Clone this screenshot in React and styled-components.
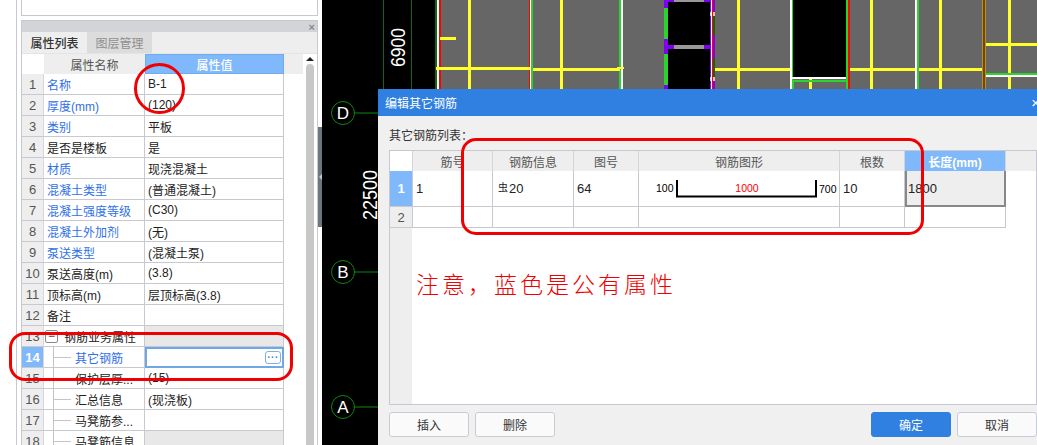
import React from "react";
import styled, { createGlobalStyle } from "styled-components";

const GlobalStyle = createGlobalStyle`
  html, body {
    margin: 0;
    background: #fff;
    overflow: hidden;
  }
  * {
    box-sizing: border-box;
  }
`;

const Screen = styled.div`
  position: relative;
  display: flex;
  width: 1037px;
  height: 445px;
  overflow: hidden;
  font-family: "Liberation Sans", "Noto Sans CJK SC", sans-serif;
  font-size: 12px;
  color: #222;
`;

/* left side */
const Sidebar = styled.div`
  display: flex;
  flex-direction: column;
  gap: 4px;
  width: 302px;
  margin-left: 16px;
  padding-left: 4px;
  border-left: 1px solid #c8c8d0;
`;

const TopBox = styled.div`
  height: 16px;
  border: 1px solid #c8c8d0;
  border-top: 0;
`;

const Panel = styled.div`
  flex: 1;
  display: flex;
  flex-direction: column;
  min-height: 0;
  border: 1px solid #c8c8d0;
  border-bottom: 0;
  background: #fff;
`;

const PanelBar = styled.div`
  display: flex;
  justify-content: flex-end;
  align-items: center;
  height: 11px;
  padding-right: 2px;
  background: #d3d4d8;
  color: #8a8a8a;
  font-size: 11px;
  font-weight: 700;
`;

const Tabs = styled.div`
  display: flex;
  height: 22px;
  background: #eee;
  border-bottom: 1px solid #e4e4e4;
`;

const Tab = styled.div`
  display: flex;
  align-items: center;
  justify-content: center;
  width: 65px;
  color: ${({ $active }) => ($active ? "#333" : "#8f8f8f")};
  font-weight: ${({ $active }) => ($active ? 500 : 400)};
  background: ${({ $active }) => ($active ? "#eee" : "#dcdcdc")};
`;

const PanelBody = styled.div`
  flex: 1;
  display: flex;
  min-height: 0;
`;

const PropTable = styled.div`
  flex: none;
  width: 281px;
  overflow: hidden;
`;

const PropHead = styled.div`
  display: grid;
  grid-template-columns: 22px 101px 139px 19px;
  height: 20px;
`;

const HeadCell = styled.div`
  display: flex;
  align-items: center;
  justify-content: center;
  background: ${({ $active, $blank }) =>
    $active ? "#7fb9fb" : $blank ? "#fff" : "#eee"};
  color: ${({ $active }) => ($active ? "#fff" : "#555")};
  border: ${({ $active }) => ($active ? "1px solid #6fade8" : "0")};
  font-weight: ${({ $active }) => ($active ? 500 : 400)};
`;

const PropRow = styled.div`
  display: grid;
  grid-template-columns: 22px 101px 139px;
  height: 21px;
`;

const RowNum = styled.div`
  display: flex;
  align-items: center;
  justify-content: center;
  background: ${({ $active }) => ($active ? "#7fb9fb" : "#eee")};
  color: ${({ $active }) => ($active ? "#fff" : "#555")};
  font-size: 13px;
  font-weight: ${({ $active }) => ($active ? 700 : 400)};
  border-bottom: 1px solid #c8c8d0;
  border-right: 1px solid #d6d6dc;
`;

const NameCell = styled.div`
  display: flex;
  align-items: center;
  padding-left: ${({ $tree }) => ($tree ? "0" : "3px")};
  color: ${({ $shared }) => ($shared ? "#2f6fe8" : "#222")};
  border-bottom: 1px solid #c8c8d0;
  border-right: 1px solid #c8c8d0;
  white-space: nowrap;
`;

const ValueCell = styled.div`
  display: flex;
  align-items: center;
  padding: 0 ${({ $editing }) => ($editing ? "1px" : "3px")};
  background: ${({ $group }) => ($group ? "#e8e8e8" : "#fff")};
  border-bottom: 1px solid #c8c8d0;
  border-right: 1px solid #c8c8d0;
  ${({ $editing }) => $editing && "border: 2px solid #6fa8e4;"}
`;

const MoreButton = styled.div`
  display: flex;
  align-items: center;
  justify-content: center;
  width: 16px;
  height: 13px;
  margin-left: auto;
  border: 1px solid #7fb0e6;
  border-radius: 3px;
  color: #4a86d0;
  font-size: 10px;
  font-weight: 700;
  line-height: 1;
  letter-spacing: 0.5px;
`;

const Expander = styled.span`
  display: flex;
  align-items: center;
  justify-content: center;
  width: 13px;
  height: 13px;
  margin: 0 6px 0 -2px;
  border: 1px solid #8a8a8a;
  border-radius: 2px;
  color: #333;
  font-size: 12px;
  line-height: 1;
`;

const TreeGuide = styled.span`
  align-self: stretch;
  width: 22px;
  margin: 0 0 -1px 9px;
  border-left: 1px solid #c4c4c4;
  background: linear-gradient(#c4c4c4, #c4c4c4) left center / 17px 1px no-repeat;
`;

const ScrollColumn = styled.div`
  flex: none;
  width: 8px;
  margin-left: 3px;
  padding-top: 3px;
`;

const ScrollArrow = styled.div`
  width: 0;
  height: 0;
  margin: 0 auto 3px;
  border: 4px solid transparent;
  border-top: 0;
  border-bottom: 4px solid #222;
`;

const ScrollThumb = styled.div`
  height: 100%;
  background: #c8c8c8;
  border-radius: 4px 4px 0 0;
`;

const Splitter = styled.div`
  display: flex;
  align-items: center;
  justify-content: center;
  flex: none;
  width: 4px;
  height: 100px;
  margin-top: 127px;
  background: #6c7680;

  &::before {
    content: "";
    border: 3px solid transparent;
    border-left: 0;
    border-right: 3px solid #c4c8cc;
  }
`;

/* drawing side */
const CadPane = styled.div`
  position: relative;
  flex: 1;
  background: #000;
  overflow: hidden;
`;

const CadSvg = styled.svg`
  display: block;
`;

const Dialog = styled.div`
  position: absolute;
  top: 89px;
  left: 56px;
  display: flex;
  flex-direction: column;
  width: 680px;
  height: 356px;
  background: #f0f0f0;
`;

const DialogTitle = styled.div`
  display: flex;
  align-items: center;
  justify-content: space-between;
  height: 27px;
  padding: 0 18px 0 7px;
  background: #2f80e0;
  color: #fff;
`;

const CloseMark = styled.span`
  font-size: 15px;
`;

const DialogBody = styled.div`
  flex: 1;
  display: flex;
  flex-direction: column;
  padding: 10px 21px 8px 11px;
`;

const ListLabel = styled.div`
  height: 20px;
  margin-bottom: 4px;
  line-height: 20px;
  color: #333;
`;

const BarTable = styled.div`
  flex: 1;
  border: 1px solid #c8c8d0;
  background: linear-gradient(#eee, #eee) left top / 22px 100% no-repeat, #fff;
`;

const BarGrid = styled.div`
  display: grid;
  grid-template-columns: 23px 80px 81px 65px 201px 65px 101px;
  height: ${({ $height }) => $height}px;
`;

const BarHeadRow = styled(BarGrid)`
  background: #eee;
`;

const BarHead = styled.div`
  display: flex;
  align-items: center;
  justify-content: center;
  border-right: 1px solid #d4d4da;
  background: ${({ $active, $blank }) =>
    $active ? "#7fb9fb" : $blank ? "#fff" : "transparent"};
  color: ${({ $active }) => ($active ? "#fff" : "#555")};
  font-weight: ${({ $active }) => ($active ? 700 : 400)};
`;

const BarNum = styled.div`
  display: flex;
  align-items: center;
  justify-content: center;
  background: ${({ $active }) => ($active ? "#7fb9fb" : "#eee")};
  color: ${({ $active }) => ($active ? "#fff" : "#555")};
  font-size: 13px;
  font-weight: ${({ $active }) => ($active ? 700 : 400)};
  border-bottom: 1px solid #c8c8d0;
  border-right: 1px solid #c8c8d0;
`;

const BarCell = styled.div`
  display: flex;
  align-items: center;
  padding-left: ${({ $selected }) => ($selected ? "1px" : "3px")};
  font-size: 13px;
  background: ${({ $selected }) => ($selected ? "#eee" : "#fff")};
  border-bottom: ${({ $selected }) =>
    $selected ? "2px solid #888" : "1px solid #c8c8d0"};
  border-right: ${({ $selected }) =>
    $selected ? "2px solid #888" : "1px solid #c8c8d0"};
  border-left: ${({ $selected }) => ($selected ? "2px solid #888" : "0")};
`;

const GradeMark = styled.span`
  position: relative;
  top: -2px;
  font-size: 10px;
  margin: 0 1px 0 2px;
`;

const FigureSvg = styled.svg`
  display: block;
  flex: none;
  margin-left: -3px;
`;

const DialogFooter = styled.div`
  display: flex;
  align-items: center;
  gap: 6px;
  margin-top: 7px;
`;

const FooterSpacer = styled.div`
  flex: 1;
`;

const Button = styled.div`
  display: flex;
  align-items: center;
  justify-content: center;
  width: 80px;
  height: 25px;
  border: 1px solid ${({ $primary }) => ($primary ? "#2f80e0" : "#c8ccd6")};
  border-radius: 3px;
  background: ${({ $primary }) => ($primary ? "#2f80e0" : "#fafafa")};
  color: ${({ $primary }) => ($primary ? "#fff" : "#333")};
`;

/* hand drawn notes on top of the screenshot */
const RedRing = styled.div`
  position: absolute;
  left: ${({ $x }) => $x}px;
  top: ${({ $y }) => $y}px;
  width: ${({ $w }) => $w}px;
  height: ${({ $h }) => $h}px;
  border: 3px solid #f00000;
  border-radius: ${({ $r }) => $r};
`;

const RedNote = styled.div`
  position: absolute;
  left: 416px;
  top: 267px;
  color: #f00000;
  font-family: "Noto Sans CJK SC", sans-serif;
  font-size: 23px;
  font-weight: 300;
  letter-spacing: 3px;
  line-height: 32px;
  white-space: nowrap;
`;

const props = [
  { name: "名称", value: "B-1", shared: true },
  { name: "厚度(mm)", value: "(120)", shared: true },
  { name: "类别", value: "平板", shared: true },
  { name: "是否是楼板", value: "是" },
  { name: "材质", value: "现浇混凝土", shared: true },
  { name: "混凝土类型", value: "(普通混凝土)", shared: true },
  { name: "混凝土强度等级", value: "(C30)", shared: true },
  { name: "混凝土外加剂", value: "(无)", shared: true },
  { name: "泵送类型", value: "(混凝土泵)", shared: true },
  { name: "泵送高度(m)", value: "(3.8)" },
  { name: "顶标高(m)", value: "层顶标高(3.8)" },
  { name: "备注", value: "" },
  { name: "钢筋业务属性", value: "", group: true },
  { name: "其它钢筋", value: "", tree: true, shared: true, editing: true },
  { name: "保护层厚...", value: "(15)", tree: true },
  { name: "汇总信息", value: "(现浇板)", tree: true },
  { name: "马凳筋参...", value: "", tree: true },
  { name: "马凳筋信息", value: "", tree: true, group: true },
];

// x, y, width, height, colour, in page pixels
const cadRects = [
  [441, 0, 596, 89, "#666"],
  [668, 0, 42, 89, "#000"],
  [793, 0, 54, 77, "#000"],
  [383, 0, 1, 89, "#0a6a0a"],
  [411, 0, 1, 89, "#0a6a0a"],
  [435, 0, 2, 89, "#0a6a0a"],
  [437, 0, 2, 89, "#fff"],
  [439, 0, 2, 89, "#f00"],
  [529, 0, 1, 89, "#f00"],
  [530, 0, 1, 89, "#fff"],
  [531, 0, 2, 89, "#2bd42b"],
  [619, 0, 2, 89, "#2bd42b"],
  [621, 0, 2, 89, "#fff"],
  [664, 0, 4, 89, "#2bd42b"],
  [664, 0, 10, 2, "#8000f0"],
  [664, 0, 4, 8, "#8000f0"],
  [664, 39, 4, 15, "#8000f0"],
  [664, 85, 4, 4, "#8000f0"],
  [668, 45, 6, 4, "#8000f0"],
  [674, 0, 30, 2, "#999"],
  [704, 0, 6, 2, "#8000f0"],
  [674, 45, 30, 4, "#999"],
  [704, 45, 6, 4, "#8000f0"],
  [710, 0, 5, 89, "#8000f0"],
  [710, 12, 5, 4, "#ccc"],
  [713, 16, 2, 19, "#0a6a0a"],
  [713, 58, 2, 19, "#0a6a0a"],
  [710, 77, 5, 4, "#ccc"],
  [711, 0, 1, 89, "#fff"],
  [712, 0, 1, 89, "#f00"],
  [468, 0, 3, 89, "#ffff2a"],
  [560, 0, 3, 89, "#ffff2a"],
  [737, 0, 3, 89, "#ffff2a"],
  [870, 0, 3, 89, "#ffff2a"],
  [939, 0, 3, 89, "#ffff2a"],
  [1008, 0, 3, 89, "#ffff2a"],
  [809, 78, 3, 11, "#ffff2a"],
  [440, 37, 16, 3, "#ffff2a"],
  [436, 67, 94, 3, "#ffff2a"],
  [533, 68, 87, 3, "#ffff2a"],
  [617, 67, 7, 2, "#ffff2a"],
  [715, 68, 75, 3, "#ffff2a"],
  [850, 68, 132, 3, "#ffff2a"],
  [982, 43, 55, 3, "#ffff2a"],
  [790, 0, 2, 89, "#fff"],
  [792, 0, 1, 80, "#2bd42b"],
  [792, 77, 56, 2, "#fff"],
  [792, 80, 56, 2, "#2bd42b"],
  [792, 80, 2, 9, "#2bd42b"],
  [846, 0, 2, 89, "#2bd42b"],
  [848, 0, 2, 89, "#f00"],
  [915, 0, 2, 89, "#fff"],
  [917, 0, 2, 89, "#2bd42b"],
  [982, 0, 1, 89, "#2bd42b"],
  [983, 0, 2, 89, "#f00"],
  [985, 0, 1, 89, "#2bd42b"],
  [986, 73, 51, 2, "#2bd42b"],
  [986, 75, 51, 2, "#fff"],
];

const axes = [
  { label: "D", y: 113 },
  { label: "B", y: 272 },
  { label: "A", y: 407 },
];

const CadDrawing = () => (
  <CadSvg width="715" height="445" viewBox="322 0 715 445">
    {cadRects.map(([x, y, w, h, fill], i) => (
      <rect key={i} x={x} y={y} width={w} height={h} fill={fill} />
    ))}
    {axes.map((axis) => (
      <g key={axis.label}>
        <circle cx="343" cy={axis.y} r="11.5" fill="none" stroke="#0a8a0a" />
        <line x1="355" y1={axis.y} x2="378" y2={axis.y} stroke="#0a8a0a" />
        <text
          x="343"
          y={axis.y + 6}
          fill="#fff"
          fontFamily="Liberation Sans, sans-serif"
          fontSize="17"
          textAnchor="middle"
        >
          {axis.label}
        </text>
      </g>
    ))}
    <text
      transform="translate(405 67) rotate(-90)"
      fill="#fff"
      fontFamily="Liberation Sans, sans-serif"
      fontSize="20"
      textLength="39"
      lengthAdjust="spacingAndGlyphs"
    >
      6900
    </text>
    <text
      transform="translate(377 220) rotate(-90)"
      fill="#fff"
      fontFamily="Liberation Sans, sans-serif"
      fontSize="20"
      textLength="50"
      lengthAdjust="spacingAndGlyphs"
    >
      22500
    </text>
  </CadSvg>
);

const BarFigure = () => (
  <FigureSvg width="200" height="35" viewBox="0 0 200 35">
    <path d="M38 9V25.5H177V9" fill="none" stroke="#000" strokeWidth="2" />
    <text x="17" y="21" fontSize="10.5" fill="#000" fontFamily="Liberation Sans, sans-serif">
      100
    </text>
    <text x="108" y="21" fontSize="10.5" fill="#f00" textAnchor="middle" fontFamily="Liberation Sans, sans-serif">
      1000
    </text>
    <text x="180" y="22" fontSize="10.5" fill="#000" fontFamily="Liberation Sans, sans-serif">
      700
    </text>
  </FigureSvg>
);

const App = () => {
  return (
    <Screen>
      <GlobalStyle />
      <Sidebar>
        <TopBox />
        <Panel>
          <PanelBar>×</PanelBar>
          <Tabs>
            <Tab $active>属性列表</Tab>
            <Tab>图层管理</Tab>
          </Tabs>
          <PanelBody>
            <PropTable>
              <PropHead>
                <HeadCell $blank />
                <HeadCell>属性名称</HeadCell>
                <HeadCell $active>属性值</HeadCell>
                <HeadCell />
              </PropHead>
              {props.map((row, i) => (
                <PropRow key={row.name}>
                  <RowNum $active={row.editing}>{i + 1}</RowNum>
                  <NameCell $shared={row.shared} $tree={row.tree}>
                    {row.tree && <TreeGuide />}
                    {i === 12 && <Expander>−</Expander>}
                    {row.name}
                  </NameCell>
                  <ValueCell $editing={row.editing} $group={row.group}>
                    {row.value}
                    {row.editing && <MoreButton>···</MoreButton>}
                  </ValueCell>
                </PropRow>
              ))}
            </PropTable>
            <ScrollColumn>
              <ScrollArrow />
              <ScrollThumb />
            </ScrollColumn>
          </PanelBody>
        </Panel>
      </Sidebar>
      <Splitter />
      <CadPane>
        <CadDrawing />
        <Dialog>
          <DialogTitle>
            编辑其它钢筋
            <CloseMark>×</CloseMark>
          </DialogTitle>
          <DialogBody>
            <ListLabel>其它钢筋列表：</ListLabel>
            <BarTable>
              <BarHeadRow $height={20}>
                <BarHead $blank />
                <BarHead>筋号</BarHead>
                <BarHead>钢筋信息</BarHead>
                <BarHead>图号</BarHead>
                <BarHead>钢筋图形</BarHead>
                <BarHead>根数</BarHead>
                <BarHead $active>长度(mm)</BarHead>
              </BarHeadRow>
              <BarGrid $height={36}>
                <BarNum $active>1</BarNum>
                <BarCell>1</BarCell>
                <BarCell>
                  <GradeMark>虫</GradeMark>20
                </BarCell>
                <BarCell>64</BarCell>
                <BarCell>
                  <BarFigure />
                </BarCell>
                <BarCell>10</BarCell>
                <BarCell $selected>1800</BarCell>
              </BarGrid>
              <BarGrid $height={21}>
                <BarNum>2</BarNum>
                <BarCell />
                <BarCell />
                <BarCell />
                <BarCell />
                <BarCell />
                <BarCell />
              </BarGrid>
            </BarTable>
            <DialogFooter>
              <Button>插入</Button>
              <Button>删除</Button>
              <FooterSpacer />
              <Button $primary>确定</Button>
              <Button>取消</Button>
            </DialogFooter>
          </DialogBody>
        </Dialog>
      </CadPane>
      <RedNote>注意，蓝色是公有属性</RedNote>
      <RedRing $x={134} $y={63} $w={51} $h={51} $r="50%" />
      <RedRing $x={9} $y={332} $w={284} $h={49} $r="16px" />
      <RedRing $x={461} $y={138} $w={463} $h={97} $r="15px" />
    </Screen>
  );
};

export default App;
